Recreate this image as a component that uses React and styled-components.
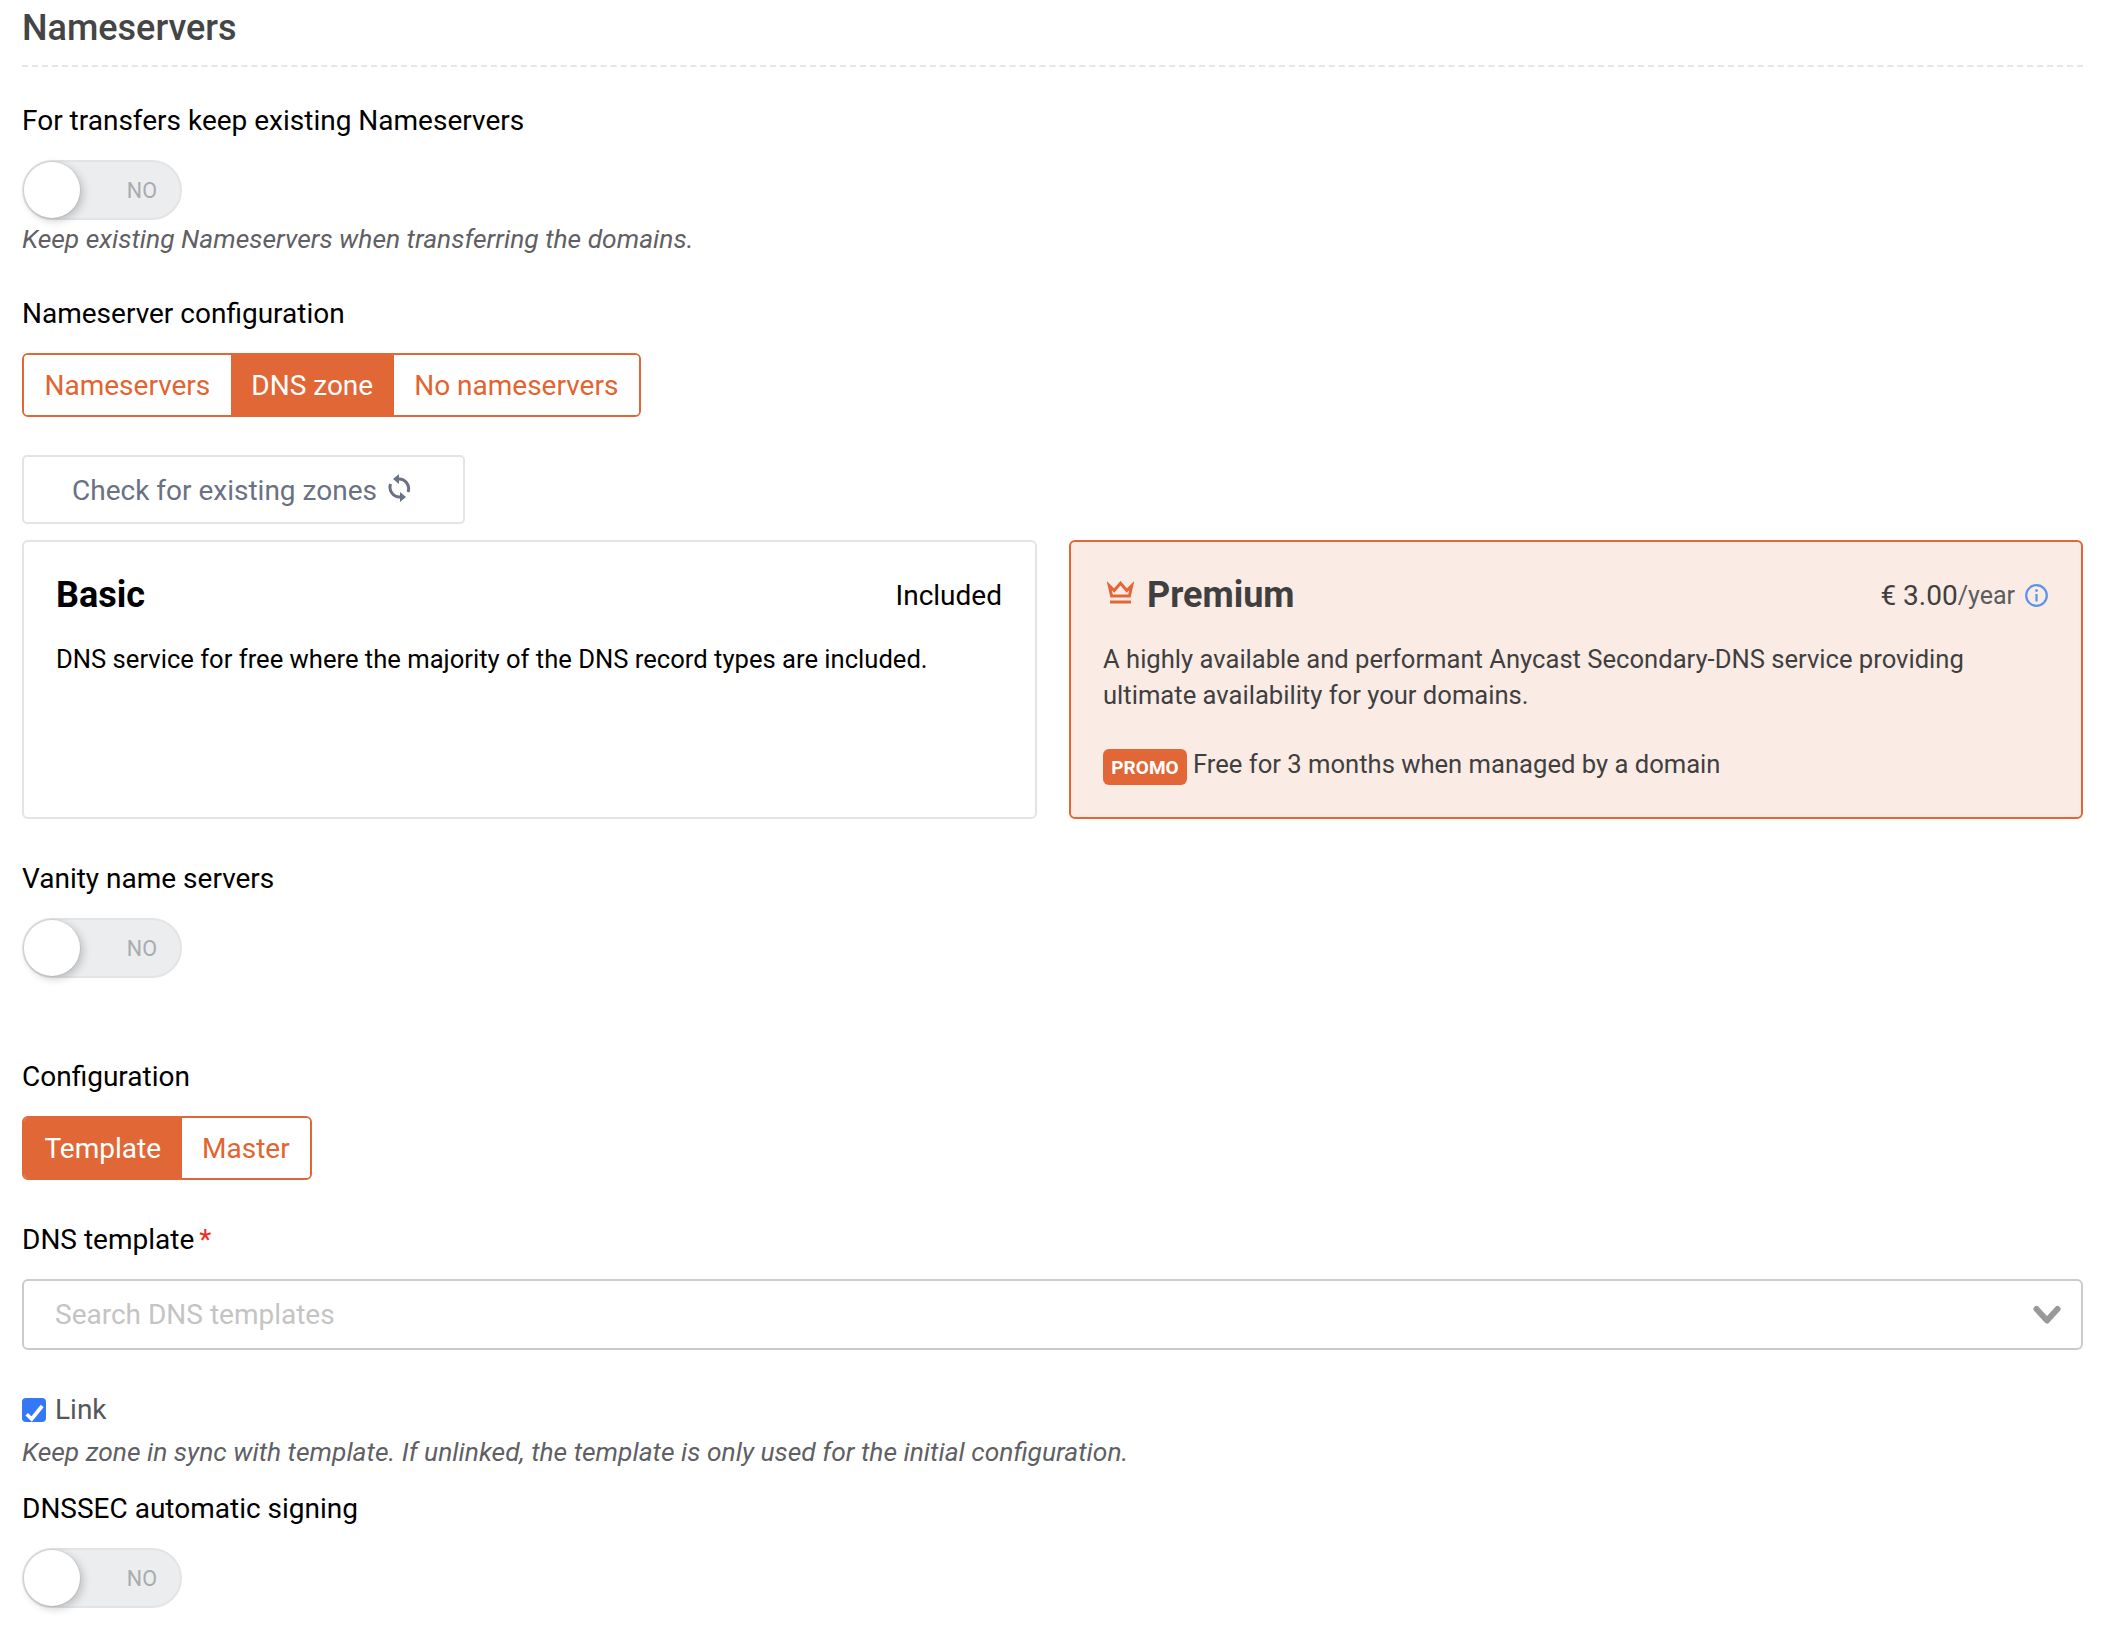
import React from "react";
import styled, { createGlobalStyle } from "styled-components";

const Global = createGlobalStyle`
  html, body { margin: 0; padding: 0; background: #fff; }
  body { font-family: Roboto, "Liberation Sans", sans-serif; color: #000; }
  * { box-sizing: border-box; }
`;

const Page = styled.div`
  width: 2106px;
  height: 1646px;
  overflow: hidden;
  padding: 0 23px 0 22px;
`;

const Heading = styled.h2`
  margin: 0;
  height: 67px;
  padding-top: 6px;
  font-size: 36px;
  line-height: 44px;
  font-weight: 500;
  color: #454545;
  border-bottom: 2px dashed #e6e6e6;
`;

const Label = styled.div`
  font-size: 28px;
  line-height: 36px;
  margin-top: ${(p) => p.$top}px;
  color: #000;
`;

const Required = styled.span`
  color: #f5281e;
  margin-left: 5px;
`;

const Toggle = styled.div`
  position: relative;
  width: 160px;
  height: 60px;
  margin-top: ${(p) => p.$top}px;
  border-radius: 30px;
  background: #ecedef;
  border: 2px solid #e3e4e6;
  display: flex;
  align-items: center;
  justify-content: flex-end;
  padding-right: 23px;
  font-size: 21.5px;
  color: #a9abae;
`;

const Knob = styled.span`
  position: absolute;
  left: 0;
  top: 0;
  width: 56px;
  height: 56px;
  border-radius: 50%;
  background: #fff;
  box-shadow: 0 0 0 1px rgba(0, 0, 0, 0.05), 3px 3px 8px rgba(0, 0, 0, 0.2);
`;

const Help = styled.div`
  font-size: 26.4px;
  line-height: 34px;
  font-style: italic;
  color: #5f6064;
  margin-top: ${(p) => p.$top}px;
`;

const Group = styled.div`
  display: inline-flex;
  height: 64px;
  margin-top: 21px;
  border: 2px solid #e26736;
  border-radius: 6px;
  overflow: hidden;
`;

const GroupRow = styled.div`
  display: flex;
`;

const Segment = styled.div`
  display: flex;
  align-items: center;
  padding: 0 20.5px;
  font-size: 28px;
  background: ${(p) => (p.$active ? "#e26736" : "#fff")};
  color: ${(p) => (p.$active ? "#fff" : "#e2642f")};
`;

const CheckButton = styled.div`
  width: 443px;
  height: 69px;
  margin-top: 38px;
  border: 2px solid #e3e4e6;
  border-radius: 5px;
  display: flex;
  align-items: center;
  padding: 2px 0 0 48px;
  gap: 11px;
  font-size: 28px;
  color: #6a7183;
`;

const Sync = styled.svg`
  margin-bottom: 5px;
`;

const Plans = styled.div`
  display: grid;
  grid-template-columns: 1015px 1014px;
  gap: 32px;
  margin-top: 16px;
`;

const Plan = styled.div`
  height: 279px;
  padding: 30px 33px 0 32px;
  border-radius: 6px;
  border: 2px solid ${(p) => (p.$premium ? "#e26736" : "#e3e4e6")};
  background: ${(p) => (p.$premium ? "#faebe5" : "#fff")};
  color: ${(p) => (p.$premium ? "#3f3f3f" : "#000")};
`;

const PlanHead = styled.div`
  display: flex;
  align-items: center;
  justify-content: space-between;
  height: 46px;
`;

const PlanName = styled.div`
  display: flex;
  align-items: center;
  gap: 13px;
  font-size: 36px;
  font-weight: 700;
`;

const Crown = styled.svg`
  margin: 0 0 5px 4px;
`;

const Price = styled.div`
  display: flex;
  align-items: center;
  font-size: 28px;
`;

const Per = styled.span`
  font-size: 25px;
  color: #5c5c5c;
  margin-right: 10px;
`;

const PlanText = styled.p`
  margin: 23px 0 0;
  font-size: 25.6px;
  line-height: 36px;
`;

const PromoLine = styled.div`
  display: flex;
  align-items: center;
  gap: 6px;
  margin-top: 30px;
  font-size: 25.6px;
`;

const Promo = styled.span`
  display: inline-flex;
  align-items: center;
  justify-content: center;
  width: 84px;
  height: 36px;
  margin-top: 6px;
  border-radius: 6px;
  background: #e26736;
  color: #fff;
  font-size: 19px;
  font-weight: 700;
`;

const Select = styled.div`
  height: 71px;
  margin-top: 21px;
  border: 2px solid #cbcbcb;
  border-radius: 6px;
  display: flex;
  align-items: center;
  justify-content: space-between;
  padding: 0 20px 0 31px;
  font-size: 28px;
  color: #c4c4c4;
`;

const CheckRow = styled.div`
  display: flex;
  align-items: center;
  gap: 9px;
  margin-top: 42px;
  font-size: 28px;
  line-height: 36px;
  color: #55575b;
`;

const Box = styled.span`
  width: 24px;
  height: 24px;
  border-radius: 4px;
  background: #3478f6;
  display: block;
`;

const SyncIcon = () => (
  <Sync width="23" height="28" viewBox="0 0 23 28" fill="none" stroke="#6a7183" strokeWidth="3">
    <path d="M10 5 A9.7 9.7 0 0 1 20 18" />
    <path d="M12.5 23 A9.7 9.7 0 0 1 2.6 10" />
    <path d="M5 5 L11 0 V10 Z" fill="#6a7183" stroke="none" />
    <path d="M18 23 L12 18 V28 Z" fill="#6a7183" stroke="none" />
  </Sync>
);

const CrownIcon = () => (
  <Crown width="27" height="24" viewBox="0 0 27 24" fill="none" stroke="#e26736" strokeWidth="3">
    <path d="M2.2 4.5 L4.6 15 H22.4 L24.8 4.5 L19.8 9.5 L13.5 2.2 L7.2 9.5 Z" />
    <path d="M3 21 H24" />
  </Crown>
);

const InfoIcon = () => (
  <svg width="23" height="23" viewBox="0 0 23 23" fill="none" stroke="#5a93ea" strokeWidth="2.2">
    <circle cx="11.5" cy="11.5" r="10.3" />
    <path d="M11.5 10 V17.5" />
    <circle cx="11.5" cy="6.6" r="1.4" fill="#5a93ea" stroke="none" />
  </svg>
);

const Chevron = () => (
  <svg width="28" height="20" viewBox="0 0 28 20" fill="none" stroke="#999" strokeWidth="6" strokeLinecap="round" strokeLinejoin="round">
    <path d="M3.5 4 L14 15.5 L24.5 4" />
  </svg>
);

const Check = () => (
  <svg width="24" height="24" viewBox="0 0 24 24" fill="none" stroke="#fff" strokeWidth="3.6">
    <path d="M4.7 13.2 L9.7 18 L20.2 5" />
  </svg>
);

const Switch = ({ top }) => (
  <Toggle $top={top}>
    <Knob />
    NO
  </Toggle>
);

export default function App() {
  return (
    <Page>
      <Global />
      <Heading>Nameservers</Heading>
      <Label $top={36}>For transfers keep existing Nameservers</Label>
      <Switch top={21} />
      <Help $top={2}>Keep existing Nameservers when transferring the domains.</Help>
      <Label $top={40}>Nameserver configuration</Label>
      <GroupRow>
        <Group>
          <Segment>Nameservers</Segment>
          <Segment $active>DNS zone</Segment>
          <Segment>No nameservers</Segment>
        </Group>
      </GroupRow>
      <CheckButton>
        Check for existing zones
        <SyncIcon />
      </CheckButton>
      <Plans>
        <Plan>
          <PlanHead>
            <PlanName>Basic</PlanName>
            <Price>Included</Price>
          </PlanHead>
          <PlanText>DNS service for free where the majority of the DNS record types are included.</PlanText>
        </Plan>
        <Plan $premium>
          <PlanHead>
            <PlanName>
              <CrownIcon />
              Premium
            </PlanName>
            <Price>
              € 3.00<Per>/year</Per>
              <InfoIcon />
            </Price>
          </PlanHead>
          <PlanText>
            A highly available and performant Anycast Secondary-DNS service providing ultimate availability for your domains.
          </PlanText>
          <PromoLine>
            <Promo>PROMO</Promo>
            Free for 3 months when managed by a domain
          </PromoLine>
        </Plan>
      </Plans>
      <Label $top={42}>Vanity name servers</Label>
      <Switch top={21} />
      <Label $top={81}>Configuration</Label>
      <GroupRow>
        <Group>
          <Segment $active>Template</Segment>
          <Segment>Master</Segment>
        </Group>
      </GroupRow>
      <Label $top={42}>
        DNS template<Required>*</Required>
      </Label>
      <Select>
        Search DNS templates
        <Chevron />
      </Select>
      <CheckRow>
        <Box>
          <Check />
        </Box>
        Link
      </CheckRow>
      <Help $top={7}>Keep zone in sync with template. If unlinked, the template is only used for the initial configuration.</Help>
      <Label $top={22}>DNSSEC automatic signing</Label>
      <Switch top={21} />
    </Page>
  );
}
